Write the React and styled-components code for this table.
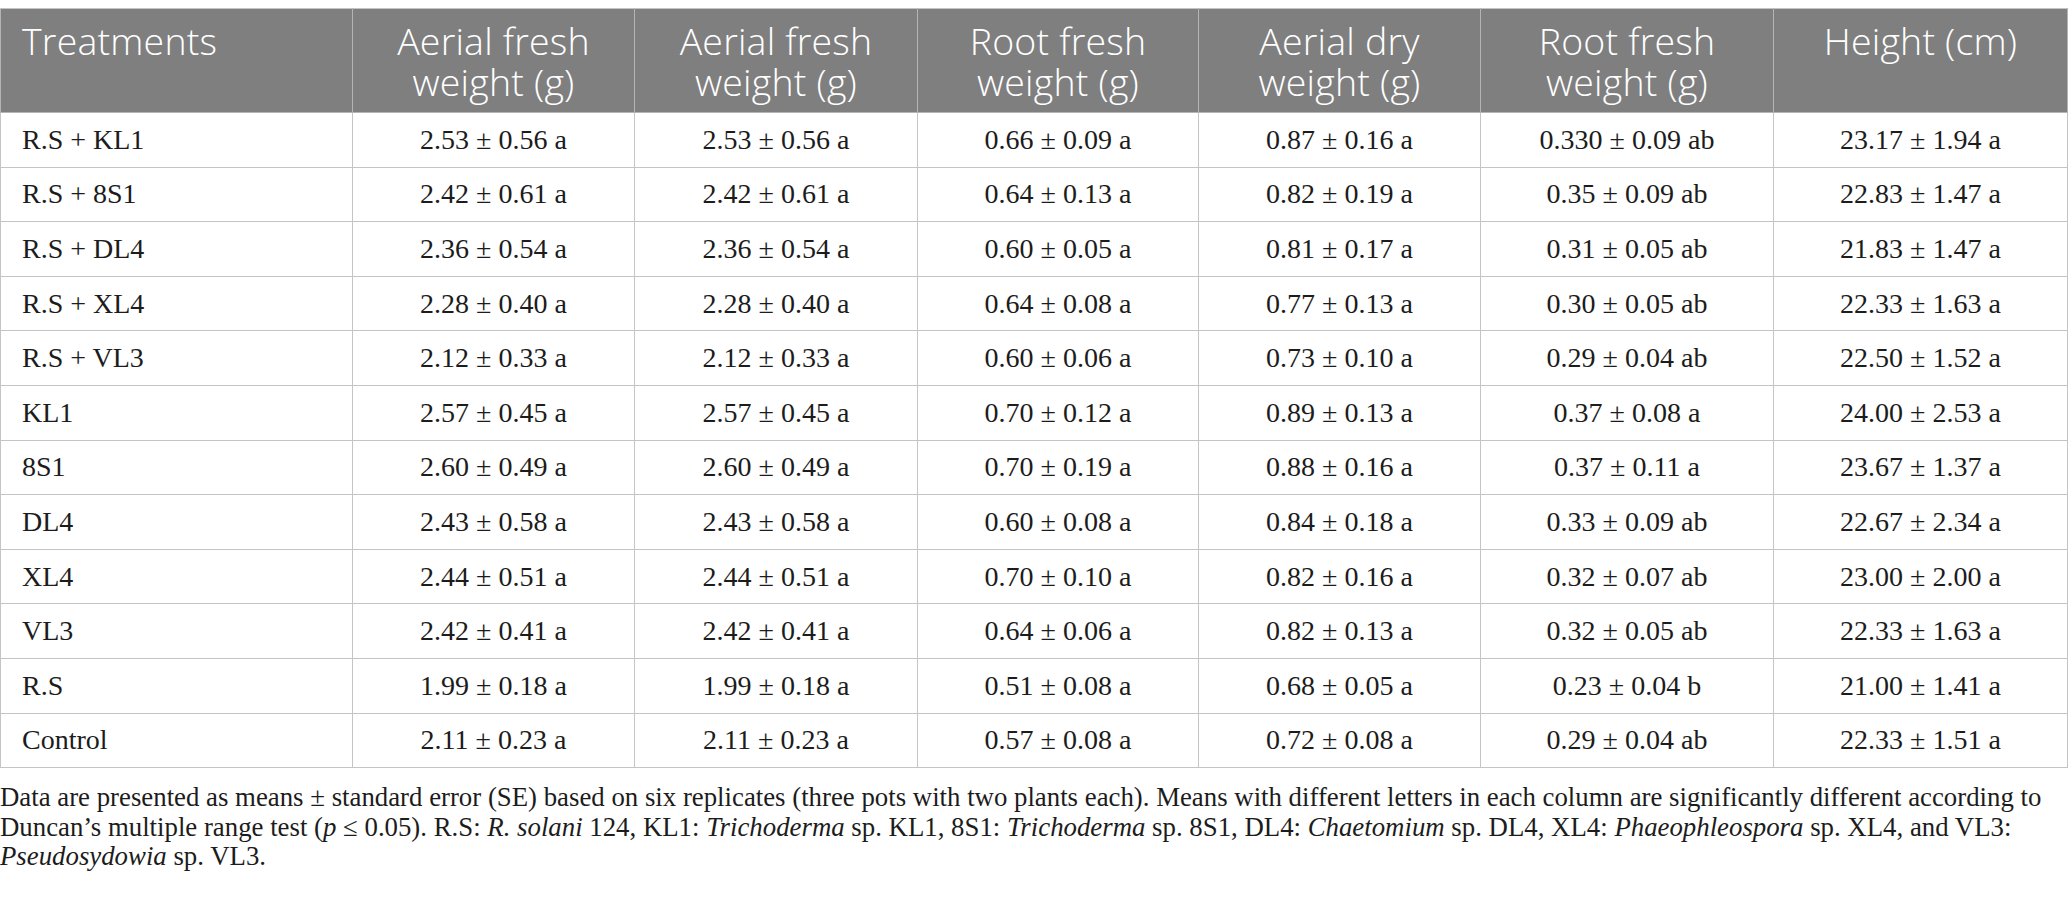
import React from "react";
import styled, { createGlobalStyle } from "styled-components";

const Global = createGlobalStyle`
  html, body { margin: 0; padding: 0; background: #ffffff; }
  body { padding-top: 8px; }
`;

const Page = styled.div`
  width: 2068px;
  display: flex;
  flex-direction: column;
`;

const Table = styled.table`
  width: 2067px;
  border-collapse: collapse;
  table-layout: fixed;
  border: 1px solid #c4c4c4;
`;

const HeadCell = styled.th`
  background: #7f7f7f;
  color: #ffffff;
  font-family: "Open Sans", "DejaVu Sans", sans-serif;
  font-weight: 300;
  font-size: 37.5px;
  letter-spacing: 0.2px;
  line-height: 41px;
  vertical-align: top;
  text-align: ${(p) => (p.$left ? "left" : "center")};
  padding: 11px 10px 10px;
  padding-left: ${(p) => (p.$left ? "21px" : "10px")};
  border: 1px solid #b4b4b4;
  border-top-color: #c4c4c4;
  height: 82px;
`;

const Cell = styled.td`
  font-family: "Liberation Serif", "Times New Roman", serif;
  font-size: 28px;
  color: #1c1c1c;
  text-align: ${(p) => (p.$left ? "left" : "center")};
  padding: 0 8px;
  padding-left: ${(p) => (p.$left ? "21px" : "8px")};
  border: 1px solid #c4c4c4;
  height: 53.6px;
  vertical-align: middle;
  white-space: nowrap;
`;

const Footnote = styled.p`
  margin: 15px 0 0;
  font-family: "Liberation Serif", "Times New Roman", serif;
  font-size: 26.8px;
  line-height: 29.5px;
  color: #1c1c1c;
  white-space: nowrap;
`;

const widths = [352, 282, 283, 281, 282, 293, 294];

const headers = [
  "Treatments",
  "Aerial fresh weight (g)",
  "Aerial fresh weight (g)",
  "Root fresh weight (g)",
  "Aerial dry weight (g)",
  "Root fresh weight (g)",
  "Height (cm)",
];

const rows = [
  ["R.S + KL1", "2.53 ± 0.56 a", "2.53 ± 0.56 a", "0.66 ± 0.09 a", "0.87 ± 0.16 a", "0.330 ± 0.09 ab", "23.17 ± 1.94 a"],
  ["R.S + 8S1", "2.42 ± 0.61 a", "2.42 ± 0.61 a", "0.64 ± 0.13 a", "0.82 ± 0.19 a", "0.35 ± 0.09 ab", "22.83 ± 1.47 a"],
  ["R.S + DL4", "2.36 ± 0.54 a", "2.36 ± 0.54 a", "0.60 ± 0.05 a", "0.81 ± 0.17 a", "0.31 ± 0.05 ab", "21.83 ± 1.47 a"],
  ["R.S + XL4", "2.28 ± 0.40 a", "2.28 ± 0.40 a", "0.64 ± 0.08 a", "0.77 ± 0.13 a", "0.30 ± 0.05 ab", "22.33 ± 1.63 a"],
  ["R.S + VL3", "2.12 ± 0.33 a", "2.12 ± 0.33 a", "0.60 ± 0.06 a", "0.73 ± 0.10 a", "0.29 ± 0.04 ab", "22.50 ± 1.52 a"],
  ["KL1", "2.57 ± 0.45 a", "2.57 ± 0.45 a", "0.70 ± 0.12 a", "0.89 ± 0.13 a", "0.37 ± 0.08 a", "24.00 ± 2.53 a"],
  ["8S1", "2.60 ± 0.49 a", "2.60 ± 0.49 a", "0.70 ± 0.19 a", "0.88 ± 0.16 a", "0.37 ± 0.11 a", "23.67 ± 1.37 a"],
  ["DL4", "2.43 ± 0.58 a", "2.43 ± 0.58 a", "0.60 ± 0.08 a", "0.84 ± 0.18 a", "0.33 ± 0.09 ab", "22.67 ± 2.34 a"],
  ["XL4", "2.44 ± 0.51 a", "2.44 ± 0.51 a", "0.70 ± 0.10 a", "0.82 ± 0.16 a", "0.32 ± 0.07 ab", "23.00 ± 2.00 a"],
  ["VL3", "2.42 ± 0.41 a", "2.42 ± 0.41 a", "0.64 ± 0.06 a", "0.82 ± 0.13 a", "0.32 ± 0.05 ab", "22.33 ± 1.63 a"],
  ["R.S", "1.99 ± 0.18 a", "1.99 ± 0.18 a", "0.51 ± 0.08 a", "0.68 ± 0.05 a", "0.23 ± 0.04 b", "21.00 ± 1.41 a"],
  ["Control", "2.11 ± 0.23 a", "2.11 ± 0.23 a", "0.57 ± 0.08 a", "0.72 ± 0.08 a", "0.29 ± 0.04 ab", "22.33 ± 1.51 a"],
];

export default function App() {
  return (
    <>
      <Global />
      <Page>
        <Table>
          <colgroup>
            {widths.map((w, i) => (
              <col key={i} style={{ width: w }} />
            ))}
          </colgroup>
          <thead>
            <tr>
              {headers.map((h, i) => (
                <HeadCell key={i} $left={i === 0}>
                  {h}
                </HeadCell>
              ))}
            </tr>
          </thead>
          <tbody>
            {rows.map((r, ri) => (
              <tr key={ri}>
                {r.map((c, ci) => (
                  <Cell key={ci} $left={ci === 0}>
                    {c}
                  </Cell>
                ))}
              </tr>
            ))}
          </tbody>
        </Table>
        <Footnote>
          Data are presented as means ± standard error (SE) based on six replicates (three pots with two plants each). Means with different letters in each column are significantly different according to
          <br />
          Duncan’s multiple range test (<i>p</i> ≤ 0.05). R.S: <i>R. solani</i> 124, KL1: <i>Trichoderma</i> sp. KL1, 8S1: <i>Trichoderma</i> sp. 8S1, DL4: <i>Chaetomium</i> sp. DL4, XL4: <i>Phaeophleospora</i> sp. XL4, and VL3:
          <br />
          <i>Pseudosydowia</i> sp. VL3.
        </Footnote>
      </Page>
    </>
  );
}
